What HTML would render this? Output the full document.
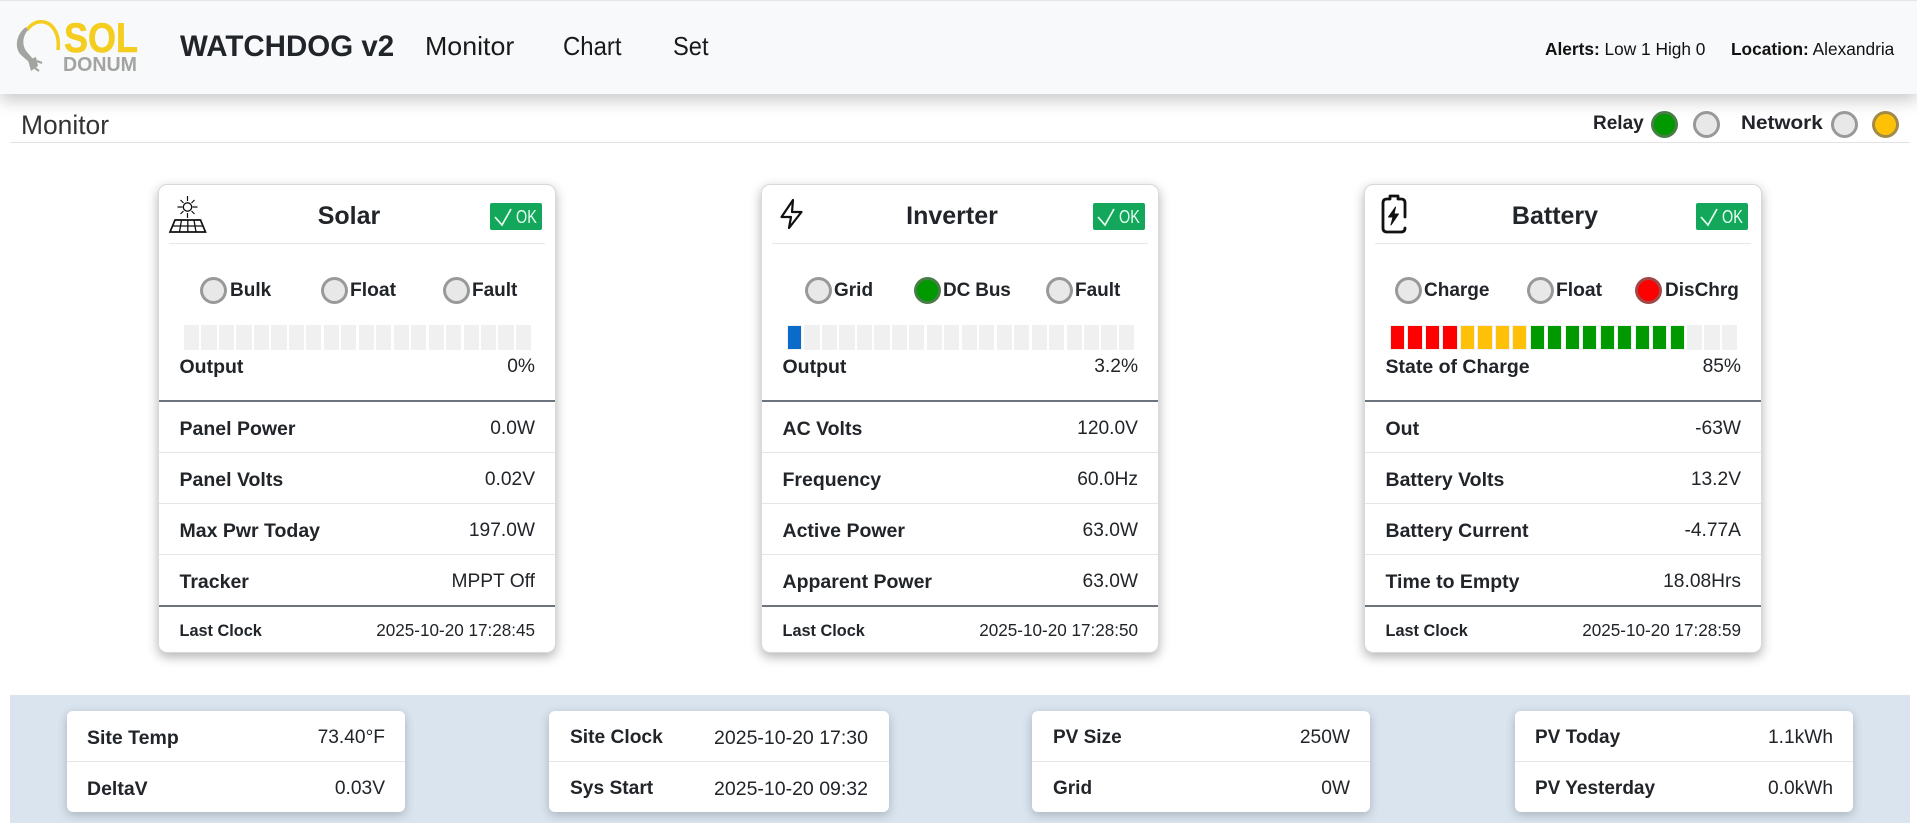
<!DOCTYPE html>
<html lang="en">
<head>
<meta charset="utf-8">
<title>WATCHDOG v2</title>
<style>
html,body{margin:0;padding:0;width:1917px;height:823px;overflow:hidden;background:#fff;color:#212529;font-family:"Liberation Sans",Arial,sans-serif}
*{box-sizing:border-box}
.t{position:absolute;white-space:nowrap;line-height:30px;height:30px;font-size:19.2px;margin-top:1px}
.b{font-weight:700;font-size:19.500px}
.r{text-align:right}
.sx{transform-origin:left center}
#hdr{position:absolute;left:0;top:0;width:1917px;height:94px;background:#f8f9fa;border-top:1px solid #e3e5e8;box-shadow:0 6px 16px rgba(0,0,0,.22)}
.card{position:absolute;top:184px;width:398px;height:469px;background:#fff;border:1px solid #d8d8d8;border-radius:9px;box-shadow:0 4px 11px rgba(0,0,0,.3)}
.hl{position:absolute;left:0;right:0;height:1px;background:#e4e6e8}
.dl{position:absolute;left:0;right:0;height:2px;background:#6c757d}
.ok{position:absolute;left:331px;top:18px;width:52px;height:27px;background:#12a75a;border-radius:2px;color:#e8fff2}
.ok svg{position:absolute;left:0;top:0}
.ok span{position:absolute;left:26px;top:0;line-height:28px;font-size:18px;display:inline-block;transform:scaleX(.8);transform-origin:left}
.led{position:absolute;width:27px;height:27px;border-radius:50%;background:#e8e8e8;border:3px solid rgba(110,110,110,.65)}
.g{background:#090}.y{background:#ffc107}.d{background:#f00}
.bar{position:absolute;top:140px;height:25px;width:347px;display:flex;gap:2.3px}
.bar i{flex:1;background:#f0f0f0;border:1px solid #f0f0f0;display:block}
.bar i.u{background:#0b6bcb}.bar i.d{background:#f00}.bar i.y{background:#ffc107}.bar i.g{background:#090}
.band{position:absolute;left:10px;top:695px;width:1900px;height:128px;background:#d9e4ef}
.sc{position:absolute;top:711px;height:101px;background:#fff;border-radius:6px;box-shadow:0 3px 10px rgba(0,0,0,.22)}
.sc .hl{top:50px}
.ttl{left:0;width:398px;top:15px;font-size:25px;text-align:center;padding-right:18px}
.lc{font-size:16.300px}
.dt{font-size:17.100px}
</style>
</head>
<body>

<div id="hdr"></div>

<svg style="position:absolute;left:0;top:0" width="150" height="90" viewBox="0 0 150 90">
  <path d="M27 30 C32 23 38 21 44 22 C53 24 60 34 58 50" fill="none" stroke="#f4cd1e" stroke-width="3.500"/>
  <path d="M26 27 C16 34 14 48 21 55 L29 62 L33 59 L27 52 C22 46 22 37 28 30 Z" fill="#a3a3a1"/>
  <path d="M28 60 L36 57 L38 66 L31 71 Z" fill="#a3a3a1"/>
  <path d="M37 61 L42 63 M35 68 L39 71" fill="none" stroke="#a3a3a1" stroke-width="2.200"/>
  <text x="64" y="52" font-family="Liberation Sans" font-weight="700" font-size="42" fill="#f4cd1e" stroke="#f4cd1e" stroke-width=".6" textLength="74" lengthAdjust="spacingAndGlyphs">SOL</text>
  <text x="63" y="71" font-family="Liberation Sans" font-weight="700" font-size="20" fill="#a3a3a1" textLength="74" lengthAdjust="spacingAndGlyphs">DONUM</text>
</svg>

<div class="t b" style="left:180px;top:31px;font-size:29.500px">WATCHDOG v2</div>
<div class="t sx" style="left:425px;top:30px;font-size:26px;color:#1a1a1a;transform:scaleX(1.03)">Monitor</div>
<div class="t sx" style="left:563px;top:30px;font-size:26px;color:#1a1a1a;transform:scaleX(.92)">Chart</div>
<div class="t sx" style="left:673px;top:30px;font-size:26px;color:#1a1a1a;transform:scaleX(.91)">Set</div>
<div class="t" style="left:1545px;top:33px;font-size:17.300px;color:#111"><b>Alerts:</b> Low 1 High 0</div>
<div class="t" style="left:1731px;top:33px;font-size:17.300px;color:#111"><b>Location:</b> Alexandria</div>

<div class="t" style="left:21px;top:109px;font-size:26.400px;color:#333">Monitor</div>
<div style="position:absolute;left:10px;top:142px;width:1900px;height:1px;background:#e2e2e2"></div>
<div class="t b" style="left:1593px;top:108px;font-size:19px">Relay</div>
<div class="led g" style="left:1651px;top:110.500px"></div>
<div class="led" style="left:1693px;top:110.500px"></div>
<div class="t b sx" style="left:1741px;top:108px;font-size:19px;transform:scaleX(1.09)">Network</div>
<div class="led" style="left:1831px;top:110.500px"></div>
<div class="led y" style="left:1872px;top:110.500px"></div>

<!-- SOLAR -->
<div class="card" style="left:158px">
  <svg style="position:absolute;left:-1px;top:-1px" width="70" height="60" viewBox="158 184 70 60" fill="none" stroke="#111">
    <circle cx="187.500" cy="207" r="4.200" stroke-width="1.300"/>
    <path d="M187.500 196v5M187.500 213v5M177.500 207h5M192.500 207h5M180.500 200l3 3M191.500 211l3 3M194.500 200l-3 3M183.500 211l-3 3" stroke-width="1.200"/>
    <path d="M175 220H200.500L205.500 232H170Z" stroke-width="1.700"/>
    <path d="M172.500 226H203M181.500 220L179.500 232M187.800 220V232M194 220L196 232" stroke-width="1.300"/>
  </svg>
  <div class="t b ttl">Solar</div>
  <div class="ok"><svg width="26" height="27" fill="none" stroke="#e8fff2" stroke-width="1.700"><path d="M5 14L12 22L21 6"/></svg><span>OK</span></div>
  <div class="hl" style="top:58px;left:10px;right:10px"></div>

  <div class="led" style="left:41px;top:92px"></div><div class="t b" style="left:71px;top:90px;font-size:19px">Bulk</div>
  <div class="led" style="left:162px;top:92px"></div><div class="t b" style="left:191px;top:90px;font-size:19.300px">Float</div>
  <div class="led" style="left:284px;top:92px"></div><div class="t b" style="left:313px;top:90px;font-size:19px">Fault</div>

  <div class="bar" style="left:25px"><i></i><i></i><i></i><i></i><i></i><i></i><i></i><i></i><i></i><i></i><i></i><i></i><i></i><i></i><i></i><i></i><i></i><i></i><i></i><i></i></div>

  <div class="t b" style="left:20.500px;top:166px">Output</div><div class="t r" style="right:20px;top:166px">0%</div>
  <div class="dl" style="top:215px"></div>
  <div class="t b" style="left:20.500px;top:228px">Panel Power</div><div class="t r" style="right:20px;top:228px">0.0W</div>
  <div class="hl" style="top:267px"></div>
  <div class="t b" style="left:20.500px;top:279px">Panel Volts</div><div class="t r" style="right:20px;top:279px">0.02V</div>
  <div class="hl" style="top:318px"></div>
  <div class="t b" style="left:20.500px;top:330px">Max Pwr Today</div><div class="t r" style="right:20px;top:330px">197.0W</div>
  <div class="hl" style="top:369px"></div>
  <div class="t b" style="left:20.500px;top:381px">Tracker</div><div class="t r" style="right:20px;top:381px">MPPT Off</div>
  <div class="dl" style="top:420px"></div>
  <div class="t b lc" style="left:20.500px;top:430px">Last Clock</div><div class="t r dt" style="right:20px;top:430px">2025-10-20 17:28:45</div>
</div>

<!-- INVERTER -->
<div class="card" style="left:761px">
  <svg style="position:absolute;left:-1px;top:-1px" width="70" height="60" viewBox="761 184 70 60" fill="none" stroke="#111" stroke-width="2.200" stroke-linejoin="round">
    <path d="M793 200L781.500 217H791L789 228L801.500 212H792Z"/>
  </svg>
  <div class="t b ttl">Inverter</div>
  <div class="ok"><svg width="26" height="27" fill="none" stroke="#e8fff2" stroke-width="1.700"><path d="M5 14L12 22L21 6"/></svg><span>OK</span></div>
  <div class="hl" style="top:58px;left:10px;right:10px"></div>

  <div class="led" style="left:43px;top:92px"></div><div class="t b" style="left:72px;top:90px;font-size:19px">Grid</div>
  <div class="led g" style="left:152px;top:92px"></div><div class="t b" style="left:181px;top:90px;font-size:19px;letter-spacing:-.15px">DC Bus</div>
  <div class="led" style="left:284px;top:92px"></div><div class="t b" style="left:313px;top:90px;font-size:19px">Fault</div>

  <div class="bar" style="left:25px"><i class="u"></i><i></i><i></i><i></i><i></i><i></i><i></i><i></i><i></i><i></i><i></i><i></i><i></i><i></i><i></i><i></i><i></i><i></i><i></i><i></i></div>

  <div class="t b" style="left:20.500px;top:166px">Output</div><div class="t r" style="right:20px;top:166px">3.2%</div>
  <div class="dl" style="top:215px"></div>
  <div class="t b" style="left:20.500px;top:228px">AC Volts</div><div class="t r" style="right:20px;top:228px">120.0V</div>
  <div class="hl" style="top:267px"></div>
  <div class="t b" style="left:20.500px;top:279px">Frequency</div><div class="t r" style="right:20px;top:279px">60.0Hz</div>
  <div class="hl" style="top:318px"></div>
  <div class="t b" style="left:20.500px;top:330px">Active Power</div><div class="t r" style="right:20px;top:330px">63.0W</div>
  <div class="hl" style="top:369px"></div>
  <div class="t b" style="left:20.500px;top:381px">Apparent Power</div><div class="t r" style="right:20px;top:381px">63.0W</div>
  <div class="dl" style="top:420px"></div>
  <div class="t b lc" style="left:20.500px;top:430px">Last Clock</div><div class="t r dt" style="right:20px;top:430px">2025-10-20 17:28:50</div>
</div>

<!-- BATTERY -->
<div class="card" style="left:1364px">
  <svg style="position:absolute;left:-1px;top:-1px" width="70" height="60" viewBox="1364 184 70 60" fill="none" stroke="#111" stroke-width="2.800" stroke-linecap="round" stroke-linejoin="round">
    <path d="M1405 217V203Q1405 199 1401 199H1398V196H1390V199H1387Q1383 199 1383 203V228Q1383 232 1387 232H1401Q1405 232 1405 228"/>
    <path d="M1395.500 207L1388.500 217H1393L1391 225L1398.500 214H1394Z" fill="#111" stroke-width="1"/>
  </svg>
  <div class="t b ttl">Battery</div>
  <div class="ok"><svg width="26" height="27" fill="none" stroke="#e8fff2" stroke-width="1.700"><path d="M5 14L12 22L21 6"/></svg><span>OK</span></div>
  <div class="hl" style="top:58px;left:10px;right:10px"></div>

  <div class="led" style="left:30px;top:92px"></div><div class="t b" style="left:59px;top:90px;font-size:19px">Charge</div>
  <div class="led" style="left:162px;top:92px"></div><div class="t b" style="left:191px;top:90px;font-size:19.300px">Float</div>
  <div class="led d" style="left:270px;top:92px"></div><div class="t b" style="left:300px;top:90px;font-size:19px">DisChrg</div>

  <div class="bar" style="left:25px"><i class="d"></i><i class="d"></i><i class="d"></i><i class="d"></i><i class="y"></i><i class="y"></i><i class="y"></i><i class="y"></i><i class="g"></i><i class="g"></i><i class="g"></i><i class="g"></i><i class="g"></i><i class="g"></i><i class="g"></i><i class="g"></i><i class="g"></i><i></i><i></i><i></i></div>

  <div class="t b" style="left:20.500px;top:166px">State of Charge</div><div class="t r" style="right:20px;top:166px">85%</div>
  <div class="dl" style="top:215px"></div>
  <div class="t b" style="left:20.500px;top:228px">Out</div><div class="t r" style="right:20px;top:228px">-63W</div>
  <div class="hl" style="top:267px"></div>
  <div class="t b" style="left:20.500px;top:279px">Battery Volts</div><div class="t r" style="right:20px;top:279px">13.2V</div>
  <div class="hl" style="top:318px"></div>
  <div class="t b" style="left:20.500px;top:330px">Battery Current</div><div class="t r" style="right:20px;top:330px">-4.77A</div>
  <div class="hl" style="top:369px"></div>
  <div class="t b" style="left:20.500px;top:381px">Time to Empty</div><div class="t r" style="right:20px;top:381px">18.08Hrs</div>
  <div class="dl" style="top:420px"></div>
  <div class="t b lc" style="left:20.500px;top:430px">Last Clock</div><div class="t r dt" style="right:20px;top:430px">2025-10-20 17:28:59</div>
</div>

<!-- BOTTOM BAND -->
<div class="band"></div>

<div class="sc" style="left:67px;width:338px">
  <div class="t b" style="left:20px;top:11px">Site Temp</div><div class="t r" style="right:20px;top:11px">73.40°F</div>
  <div class="hl"></div>
  <div class="t b" style="left:20px;top:62px">DeltaV</div><div class="t r" style="right:20px;top:62px">0.03V</div>
</div>
<div class="sc" style="left:549px;width:340px">
  <div class="t b" style="left:21px;top:11px;font-size:19.200px">Site Clock</div><div class="t r" style="right:21px;top:11px;font-size:19.500px">2025-10-20 17:30</div>
  <div class="hl"></div>
  <div class="t b" style="left:21px;top:62px;font-size:19.200px">Sys Start</div><div class="t r" style="right:21px;top:62px;font-size:19.500px">2025-10-20 09:32</div>
</div>
<div class="sc" style="left:1032px;width:338px">
  <div class="t b" style="left:21px;top:11px;font-size:19px">PV Size</div><div class="t r" style="right:20px;top:11px">250W</div>
  <div class="hl"></div>
  <div class="t b" style="left:21px;top:62px;font-size:19px">Grid</div><div class="t r" style="right:20px;top:62px">0W</div>
</div>
<div class="sc" style="left:1515px;width:338px">
  <div class="t b" style="left:20px;top:11px;font-size:19px">PV Today</div><div class="t r" style="right:20px;top:11px">1.1kWh</div>
  <div class="hl"></div>
  <div class="t b" style="left:20px;top:62px;font-size:19px">PV Yesterday</div><div class="t r" style="right:20px;top:62px">0.0kWh</div>
</div>

</body>
</html>
